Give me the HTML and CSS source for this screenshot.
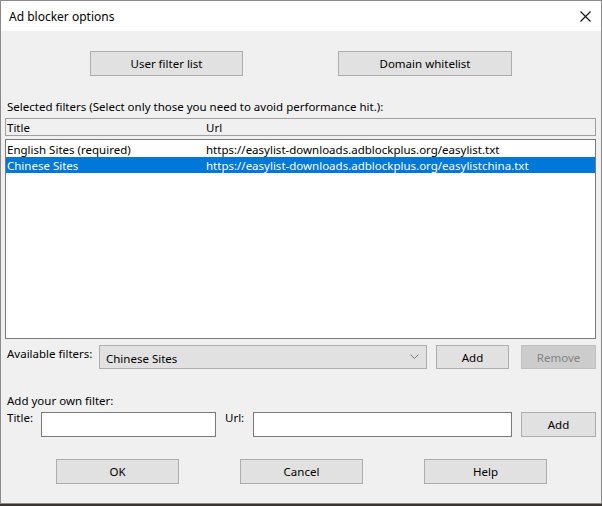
FILE: index.html
```html
<!DOCTYPE html>
<html>
<head>
<meta charset="utf-8">
<link rel="stylesheet" href="styles.css">
</head>
<body>
<div class="window">
  <div class="titlebar">
    <span class="title">Ad blocker options</span>
    <svg class="close" width="11" height="11" viewBox="0 0 11 11"><path d="M0.5 0.5 L10.5 10.5 M10.5 0.5 L0.5 10.5" stroke="#111" stroke-width="1.1" fill="none"/></svg>
  </div>
  <div class="content">
    <div class="top-buttons">
      <button class="btn btn-user">User filter list</button>
      <button class="btn btn-domain">Domain whitelist</button>
    </div>
    <div class="label sel-label">Selected filters (Select only those you need to avoid performance hit.):</div>
    <div class="list-header">
      <span class="col-title">Title</span>
      <span class="col-url">Url</span>
    </div>
    <div class="list-body">
      <div class="row"><span class="col-title">English Sites (required)</span><span class="col-url">https://easylist-downloads.adblockplus.org/easylist.txt</span></div>
      <div class="row selected"><span class="col-title">Chinese Sites</span><span class="col-url">https://easylist-downloads.adblockplus.org/easylistchina.txt</span></div>
    </div>
    <div class="avail-row">
      <span class="label avail-label">Available filters:</span>
      <div class="combo"><span>Chinese Sites</span>
        <svg class="chev" width="9" height="5" viewBox="0 0 9 5"><path d="M0.5 0.5 L4.5 4.5 L8.5 0.5" stroke="#777" stroke-width="1" fill="none"/></svg>
      </div>
      <button class="btn btn-add">Add</button>
      <button class="btn btn-remove" disabled>Remove</button>
    </div>
    <div class="label own-label">Add your own filter:</div>
    <div class="own-row">
      <span class="label own-title">Title:</span>
      <div class="input input-title"></div>
      <span class="label own-url">Url:</span>
      <div class="input input-url"></div>
      <button class="btn btn-add2">Add</button>
    </div>
    <div class="bottom-buttons">
      <button class="btn btn-bottom">OK</button>
      <button class="btn btn-bottom">Cancel</button>
      <button class="btn btn-bottom">Help</button>
    </div>
  </div>
</div>
</body>
</html>
```

FILE: styles.css
```css
html, body {
  margin: 0;
  padding: 0;
  background: #3a3530;
}
body {
  width: 602px;
  height: 506px;
  font-family: "Noto Sans", "Open Sans", sans-serif;
  font-size: 11.5px;
  color: #000;
}
.window {
  width: 602px;
  height: 504px;
  box-sizing: border-box;
  border: 1px solid #8a8a8a;
  display: flex;
  flex-direction: column;
  background: #f0f0f0;
}
.titlebar {
  height: 30px;
  background: #fff;
  display: flex;
  align-items: center;
  justify-content: space-between;
  padding: 0 10px 0 8px;
  flex: none;
}
.title {
  font-size: 12px;
}
.close {
  display: block;
}
.content {
  flex: 1;
  display: flex;
  flex-direction: column;
  background: #f0f0f0;
}
.btn {
  font-family: inherit;
  font-size: 11.5px;
  color: #000;
  background: #e1e1e1;
  border: 1px solid #adadad;
  padding: 0;
  margin: 0;
  height: 25px;
  box-sizing: border-box;
}
.btn[disabled] {
  color: #838383;
  background: #cccccc;
  border-color: #bfbfbf;
}
.top-buttons {
  display: flex;
  margin-top: 20px;
  padding-left: 89px;
  gap: 95px;
}
.btn-user { width: 153px; }
.btn-domain { width: 174px; }
.label {
  line-height: 14px;
}
.sel-label {
  margin: 24px 0 0 6px;
}
.list-header {
  margin: 4px 5px 0 4px;
  height: 18px;
  box-sizing: border-box;
  border: 1px solid #a0a0a0;
  background: #f0f0f0;
  display: flex;
  align-items: center;
}
.col-title {
  width: 199px;
  padding-left: 1px;
  flex: none;
}
.col-url {
  flex: 1;
}
.list-body {
  margin: 3px 5px 0 4px;
  height: 200px;
  box-sizing: border-box;
  border: 1px solid #7a7a7a;
  background: #fff;
  padding-top: 1px;
}
.row {
  display: flex;
  height: 16px;
  align-items: center;
}
.row.selected {
  background: #0078d7;
  color: #fff;
}
.avail-row {
  display: flex;
  align-items: flex-start;
  margin-top: 6px;
  padding-left: 6px;
}
.avail-label {
  width: 92px;
  margin-top: 2px;
}
.combo {
  width: 328px;
  height: 24px;
  box-sizing: border-box;
  border: 1px solid #adadad;
  background: #e1e1e1;
  display: flex;
  align-items: center;
  justify-content: space-between;
  padding: 2px 7px 0 6px;
}
.chev {
  display: block;
  margin-top: -3px;
}
.btn-add {
  width: 73px;
  margin-left: 9px;
  height: 24px;
}
.btn-remove {
  width: 75px;
  margin-left: 12px;
  height: 24px;
}
.own-label {
  margin: 25px 0 0 6px;
}
.own-row {
  display: flex;
  align-items: flex-start;
  margin-top: 3px;
  padding-left: 6px;
}
.own-title {
  width: 34px;
}
.input {
  height: 25px;
  box-sizing: border-box;
  border: 1px solid #7a7a7a;
  background: #fff;
  margin-top: 1px;
}
.input-title { width: 175px; }
.own-url {
  width: 28px;
  margin-left: 9px;
}
.input-url { width: 259px; }
.btn-add2 {
  width: 75px;
  margin-left: 9px;
  margin-top: 1px;
}
.bottom-buttons {
  display: flex;
  margin-top: 22px;
  padding-left: 55px;
  gap: 61px;
}
.btn-bottom {
  width: 123px;
}
```
